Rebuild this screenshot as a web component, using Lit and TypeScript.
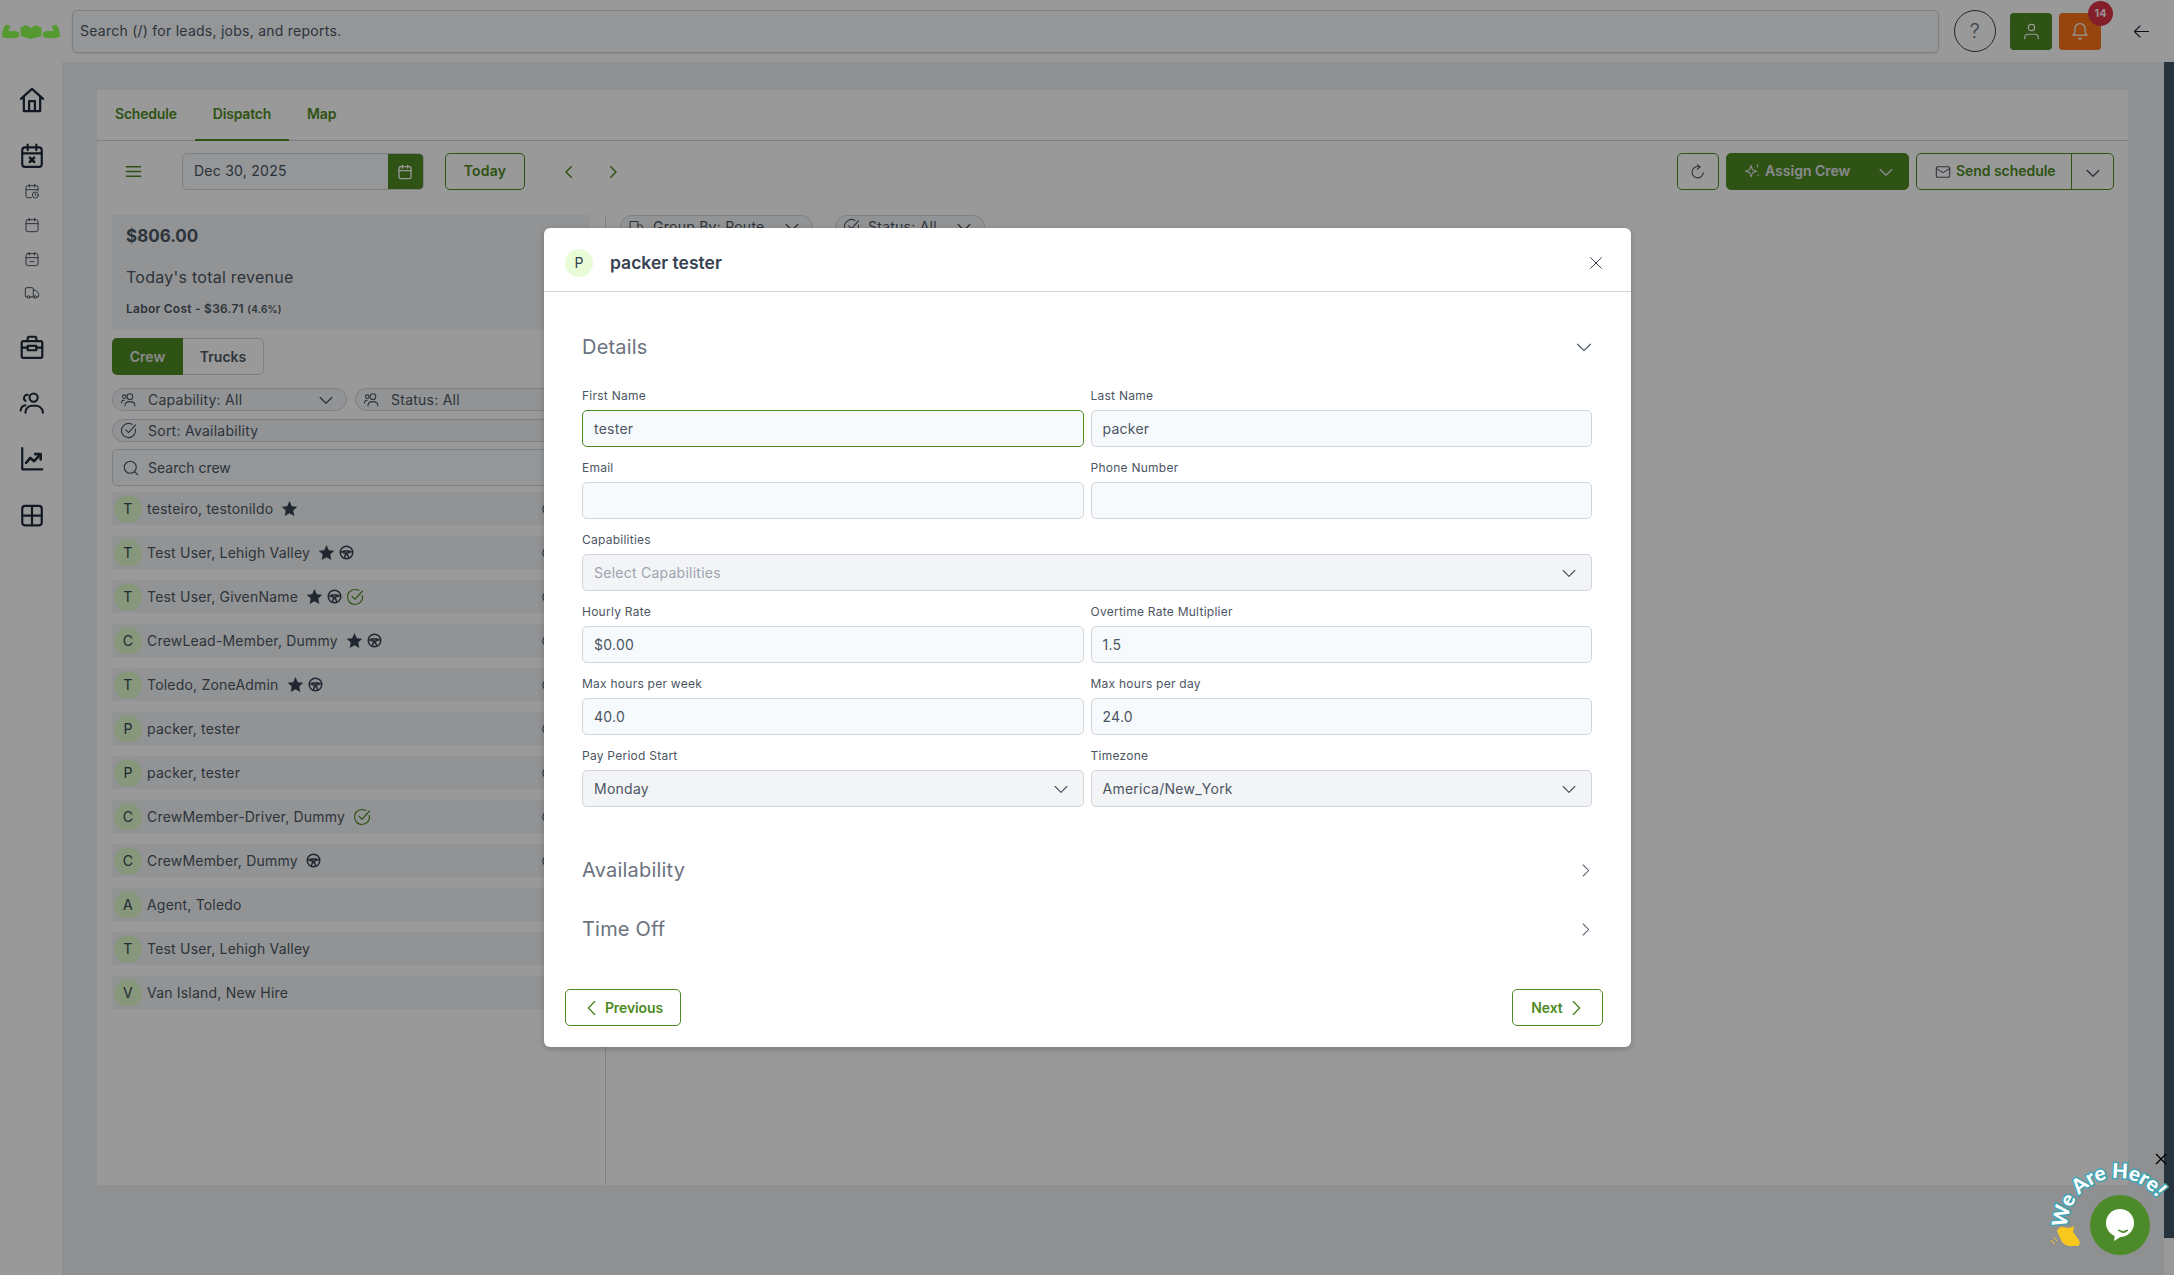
import { LitElement, html, css, svg } from 'lit';
import { customElement } from 'lit/decorators.js';

const I: Record<string, unknown> = {
  home: svg`<path d="M2.5 11 12 2.500l9.500 8.500"/><path d="M5 9v12.500h14V9"/><path d="M9.500 21.500V13h5v8.500"/>`,
  calX: svg`<rect x="3" y="4" width="18" height="18" rx="2.500"/><path d="M8 1.500v5M16 1.500v5M3 9.500h18"/><path d="m10 13.500 4 4M14 13.500l-4 4" stroke-width="2.400"/>`,
  calClock: svg`<path d="M11 22H5a2 2 0 0 1-2-2V6a2 2 0 0 1 2-2h14a2 2 0 0 1 2 2v6"/><path d="M8 2v4M16 2v4M3 10h18"/><circle cx="17" cy="18" r="4.500"/><path d="M17 16v2l1 1"/>`,
  cal: svg`<rect x="3" y="4" width="18" height="18" rx="2.500"/><path d="M8 2v4M16 2v4M3 10h18"/>`,
  calMinus: svg`<rect x="3" y="4" width="18" height="18" rx="2.500"/><path d="M8 2v4M16 2v4M3 10h18M9 16h6"/>`,
  truck: svg`<path d="M14 18V6a2 2 0 0 0-2-2H4a2 2 0 0 0-2 2v11a1 1 0 0 0 1 1h2"/><path d="M15 18H9"/><path d="M19 18h2a1 1 0 0 0 1-1v-3.650a1 1 0 0 0-.220-.620l-3.480-4.350A1 1 0 0 0 17.520 8H14"/><circle cx="17" cy="18" r="2"/><circle cx="7" cy="18" r="2"/>`,
  case: svg`<rect x="2.500" y="6.500" width="19" height="15.500" rx="1.500"/><path d="M8 6.500V4a1.500 1.500 0 0 1 1.500-1.500h5A1.500 1.500 0 0 1 16 4v2.500"/><path d="M2.500 12.500H8M16 12.500h5.500"/><path d="M8 11h8v4H8z"/>`,
  users: svg`<circle cx="13.500" cy="7" r="3.800"/><path d="M6 21v-1a6 6 0 0 1 6-5.500h3a6.500 6.500 0 0 1 7 5.500v1"/><path d="M8 4.500a3 3 0 0 0-2 5.500"/><path d="M1.500 19a5.500 5.500 0 0 1 4.500-5"/>`,
  chart: svg`<path d="M3 2v19.500h18.500"/><path d="m6.500 15.500 4-4.500 3.500 3 5.500-6" stroke-width="2.400"/><path d="M15 7.500h5v5" stroke-width="2.400"/>`,
  grid: svg`<rect x="3" y="3.500" width="18" height="18" rx="2.500"/><path d="M12 3.500v18M3 12.500h18"/>`,
  menu: svg`<path d="M3 6h18M3 12h18M3 18h18"/>`,
  search: svg`<circle cx="11" cy="11" r="8"/><path d="m21 21-4.300-4.300"/>`,
  down: svg`<path d="m5 9 7 7 7-7"/>`,
  left: svg`<path d="m15 5-7 7 7 7"/>`,
  right: svg`<path d="m9 5 7 7-7 7"/>`,
  close: svg`<path d="M4 4l16 16M20 4 4 20"/>`,
  check: svg`<path d="M21.800 10A10 10 0 1 1 17 3.340"/><path d="m8 11 4 4L22 4"/>`,
  crew: svg`<circle cx="14" cy="8" r="4"/><path d="M7 21c0-4 3-6 7-6s7 2 7 6"/><circle cx="6" cy="8" r="2.500"/><path d="M2 17c0-2.500 1.500-4 4-4"/>`,
  wheel: svg`<circle cx="12" cy="12" r="10"/><path d="M3 11C8 8 16 8 21 11L15 13A3 3 0 0 0 9 13z" fill="currentColor" stroke-width="1"/><circle cx="12" cy="14" r="1.500"/><path d="M10 16 8.500 21M14 16l1.500 5"/>`,
  route: svg`<path d="M3 19V5h11v14"/><path d="M14 10h5l2 4v5h-7"/>`,
  sparkle: svg`<path d="M10 5l2 6 6 2-6 2-2 6-2-6-6-2 6-2z"/><path d="M19 4v3M20 18v1"/>`,
  mail: svg`<rect x="2" y="4" width="20" height="16" rx="1.500"/><path d="m2 7 10 6 10-6"/>`,
  refresh: svg`<path d="M20 13a8.500 8.500 0 1 1-5-8.500"/><path d="M11 1l4 3.500L11 8"/>`,
  user: svg`<circle cx="12" cy="7" r="4"/><path d="M3.500 21v-1.500c0-2.500 2-4 4.500-4h8c2.500 0 4.500 1.500 4.500 4V21"/>`,
  bell: svg`<path d="M6 9a6 6 0 0 1 12 0c0 6 2.500 8 2.500 8h-17S6 15 6 9"/><path d="M10 20.500a2.200 2.200 0 0 0 4 0"/>`,
  back: svg`<path d="M22 12H2M10 4l-8 8 8 8"/>`,
  pin: svg`<circle cx="12" cy="12" r="9"/>`,
};

const ic = (name: string, size = 16, sw = 2) => html`<svg
  width=${size} height=${size} viewBox="0 0 24 24" fill="none" stroke="currentColor"
  stroke-width=${sw} stroke-linecap="round" stroke-linejoin="round">${I[name]}</svg>`;

const star = html`<svg width="17" height="17" viewBox="0 0 24 24" fill="currentColor"><path d="M12 1.500l3.300 7.200 7.700.9-5.700 5.300 1.500 7.700L12 18.700l-6.800 3.900 1.500-7.700L1 9.600l7.700-.9z"/></svg>`;

const crew: { a: string; n: string; s?: boolean; w?: boolean; c?: boolean; tail: boolean }[] = [
  { a: 'T', n: 'testeiro, testonildo', s: true, tail: true },
  { a: 'T', n: 'Test User, Lehigh Valley', s: true, w: true, tail: true },
  { a: 'T', n: 'Test User, GivenName', s: true, w: true, c: true, tail: true },
  { a: 'C', n: 'CrewLead-Member, Dummy', s: true, w: true, tail: true },
  { a: 'T', n: 'Toledo, ZoneAdmin', s: true, w: true, tail: true },
  { a: 'P', n: 'packer, tester', tail: true },
  { a: 'P', n: 'packer, tester', tail: true },
  { a: 'C', n: 'CrewMember-Driver, Dummy', c: true, tail: true },
  { a: 'C', n: 'CrewMember, Dummy', w: true, tail: true },
  { a: 'A', n: 'Agent, Toledo', tail: false },
  { a: 'T', n: 'Test User, Lehigh Valley', tail: false },
  { a: 'V', n: 'Van Island, New Hire', tail: false },
];

@customElement('app-root')
export class AppRoot extends LitElement {
  static styles = css`
    :host {
      display: block;
      position: relative;
      width: 2174px;
      height: 1275px;
      overflow: hidden;
      background: #fff;
      font-family: Inter, 'Liberation Sans', sans-serif;
      color: #4b5563;
      font-size: 14px;
      letter-spacing: 0.25px;
    }
    svg { display: block; flex: none; }

    .top { height: 62px; display: flex; align-items: center; }
    .logo { width: 72px; flex: none; padding-left: 2px; box-sizing: border-box; }
    .search {
      width: 1867px; height: 43px; box-sizing: border-box;
      border: 1px solid #d1d5db; border-radius: 5px; background: #f7fafd;
      box-shadow: 0 1px 2px rgba(0,0,0,.1);
      padding-left: 7px; line-height: 39px; font-size: 14px; color: #4b5563;
    }
    .help {
      width: 42px; height: 42px; box-sizing: border-box; border: 1px solid #374151; border-radius: 50%;
      margin-left: 15px; display: flex; align-items: center; justify-content: center;
      font-size: 20px; font-weight: 300; color: #6b7280;
    }
    .sq {
      position: relative; width: 42px; height: 37px; border-radius: 4px; color: #fff;
      display: flex; align-items: center; justify-content: center;
    }
    .sq.user { background: #4d8a22; margin-left: 14px; }
    .sq.bell { background: #f97316; margin-left: 7px; }
    .badge {
      position: absolute; left: 29px; top: -12px; width: 25px; height: 25px; border-radius: 50%;
      background: #dc3545; color: #fff; font-size: 11px; font-weight: 600; letter-spacing: 0;
      display: flex; align-items: center; justify-content: center;
    }
    .back { margin-left: 32px; color: #111827; }

    .body { display: flex; height: 1213px; }
    .nav {
      width: 62px; flex: none; box-sizing: border-box; padding: 26px 0 0 2px;
      display: flex; flex-direction: column; align-items: center; gap: 32px; color: #1f2937;
    }
    .nav .n { margin: -1px; }
    .nav .h { margin: -2px; }
    .navgroup { display: flex; flex-direction: column; align-items: center; gap: 18px; margin-bottom: 1.500px; color: #4b5563; }
    .navgroup .big { color: #1f2937; margin-bottom: -4px; }
    .main { flex: 1; display: flex; background: #eff1f3; min-width: 0; }
    .wrap { flex: 1; min-width: 0; padding: 28px 36px 0 35px; }
    .strip { width: 10px; height: 1176px; background: #3e5364; }
    .strip-host { width: 10px; flex: none; background: #fff; }

    .card { height: 1095px; background: #fff; display: flex; flex-direction: column; overflow: hidden; }
    .tabs { display: flex; height: 50px; border-bottom: 1px solid #d1d5db; flex: none; }
    .tab {
      padding: 0 18px; line-height: 48px; font-weight: 600; font-size: 14px; color: #4d8a22;
      margin-bottom: -1px; height: 51px; box-sizing: border-box; letter-spacing: -0.2px;
    }
    .tab.on { border-bottom: 2px solid #4d8a22; }

    .tools { display: flex; align-items: center; height: 37px; margin-top: 12px; padding-right: 14px; flex: none; }
    .ham { color: #4d8a22; margin: 0 39.4px 0 26.6px; }
    .date {
      display: flex; height: 37px; width: 242px; box-sizing: border-box; border: 1px solid #d1d5db;
      border-radius: 5px; background: #f7fafd; overflow: hidden; margin-right: 21px;
    }
    .date span { flex: 1; line-height: 33px; padding-left: 11px; }
    .date i { width: 35px; background: #4d8a22; color: #fff; display: flex; align-items: center; justify-content: center; }
    .btn {
      height: 37px; box-sizing: border-box; border: 1px solid #4d8a22; border-radius: 5px;
      color: #4d8a22; font-weight: 600; font-size: 14px; display: flex; align-items: center;
      justify-content: center; background: #fff; letter-spacing: 0;
    }
    .today { width: 80px; margin-right: 35px; letter-spacing: .25px; padding-bottom: 2px; }
    .step { color: #4d8a22; margin-right: 26px; }
    .right { margin-left: auto; display: flex; gap: 7px; }
    .refresh { width: 42px; color: #4b5563; }
    .assign { width: 183px; background: #4d8a22; color: #e5e7eb; gap: 4px; justify-content: flex-start; padding: 0 0 2px 17px; }
    .assign .caret { margin-left: auto; margin-right: 12px; margin-bottom: -2px; }
    .send { width: 198px; justify-content: flex-start; padding: 0 0 2px 18px; gap: 5px; letter-spacing: -0.05px; }
    .send svg:first-child { color: #4b5563; margin-bottom: -2px; }
    .send .sep { margin-left: auto; width: 41px; height: 35px; margin-bottom: -2px; border-left: 1px solid #4d8a22; display: flex; align-items: center; justify-content: center; }

    .content { display: flex; flex: 1; margin-top: 25px; min-height: 0; }
    .left { width: 478px; margin: 0 15px; flex: none; display: flex; flex-direction: column; }
    .rev { height: 115px; box-sizing: border-box; background: #f3f5f7; padding: 10px 14px; flex: none; }
    .rev b { display: block; font-size: 17px; line-height: 22px; font-weight: 700; letter-spacing: 0; }
    .rev p { margin: 19px 0 0; font-size: 16px; line-height: 22px; }
    .rev small { display: block; margin-top: 13px; font-size: 12px; line-height: 16px; font-weight: 600; }
    .rev small em { font-style: normal; font-size: 10px; }

    .seg { display: flex; margin-top: 8px; height: 37px; flex: none; width: 152px; border-radius: 5px; overflow: hidden; box-sizing: border-box; letter-spacing: 0; }
    .seg span { display: flex; align-items: center; justify-content: center; font-weight: 600; font-size: 14px; }
    .seg .on { width: 71px; background: #4d8a22; color: #e5e7eb; }
    .seg .off { flex: 1; border: 1px solid #d1d5db; border-left: 0; border-radius: 0 5px 5px 0; }

    .chips { display: flex; gap: 8px; margin-top: 13px; }
    .chip {
      height: 23px; box-sizing: border-box; border: 1px solid #d1d5db; border-radius: 12px;
      background: #f3f5f7; display: flex; align-items: center; padding: 0 10px 0 7px; flex: 1; min-width: 0;
      font-size: 14px; white-space: nowrap; overflow: hidden;
    }
    .chip > svg:first-child { margin-right: 11px; }
    .chip .caret { margin-left: auto; }
    .chip.full { margin-top: 8px; flex: none; }
    .find {
      height: 37px; box-sizing: border-box; margin: 7px 0 6px; border: 1px solid #d1d5db; border-radius: 5px;
      background: #f7fafd; display: flex; align-items: center; gap: 8px; padding-left: 9px; flex: none; letter-spacing: 0;
    }
    .row {
      height: 33px; margin-bottom: 11px; background: #f3f5f7; display: flex; align-items: center;
      padding: 0 35px 0 2px; flex: none; gap: 4px;
    }
    .av {
      width: 28px; height: 28px; border-radius: 50%; background: #e0fccd; color: #374151;
      display: flex; align-items: center; justify-content: center; flex: none;
    }
    .nm { margin-right: 4px; letter-spacing: .2px; }
    .row .av + .nm { margin-left: 1px; }
    .row .stat { color: #374151; }
    .row .ok { color: #4d8a22; }
    .row .tail { margin-left: auto; }

    .pane { flex: 1; border-left: 1px solid #d1d5db; padding-left: 14px; display: flex; gap: 22px; align-items: flex-start; }
    .pane .chip { flex: none; }
    .pane .chip > svg:first-child { margin-right: 8px; }
    .pane .gb { width: 193px; }
    .pane .st { width: 150px; }

    .veil { position: absolute; inset: 0; background: rgba(0,0,0,.4); }
    .modal {
      position: absolute; left: 544px; top: 228px; width: 1087px; height: 819px; background: #fff;
      border-radius: 6px; display: flex; flex-direction: column; box-shadow: 0 2px 6px rgba(0,0,0,.2);
    }
    .mhead {
      height: 64px; box-sizing: border-box; border-bottom: 1px solid #d1d5db; display: flex; align-items: center;
      padding: 6px 27px 0 21px; flex: none;
    }
    .mhead .pic { width: 28px; height: 28px; border-radius: 50%; background: #e8fcd8; color: #374151; display: flex; align-items: center; justify-content: center; margin-right: 17px; }
    .mhead b { font-size: 17.500px; font-weight: 600; color: #374151; letter-spacing: 0; }
    .mhead svg { margin-left: auto; color: #374151; }
    .mbody { padding: 35px 39px 0 38px; }
    .shead { display: flex; align-items: center; justify-content: space-between; height: 40px; font-size: 20px; color: #6b7280; letter-spacing: .2px; }
    .shead svg { color: #4b5563; }
    .shead .chev { margin-right: -3px; }
    .shead.more { margin-top: 19px; }
    .form { display: grid; grid-template-columns: 1fr 1fr; column-gap: 7px; row-gap: 12px; margin: 20px 0 43px; }
    .f.wide { grid-column: 1 / -1; }
    .f label { display: block; font-size: 12px; line-height: 18px; margin-bottom: 5px; color: #4b5563; letter-spacing: .25px; }
    .inp {
      height: 37px; box-sizing: border-box; border: 1px solid #d1d5db; border-radius: 5px; background: #f7fafd;
      padding: 0 12px 0 11px; display: flex; align-items: center; justify-content: space-between; font-size: 14px; color: #4b5563;
    }
    .inp.sel { background: #f3f4f6; }
    .inp.focus { border-color: #4d8a22; }
    .inp .ph { color: #9ca3af; }
    .mfoot { margin-top: auto; display: flex; justify-content: space-between; padding: 0 28px 21px 21px; }
    .mfoot .btn { gap: 2px; letter-spacing: -0.1px; }
    .prev { width: 116px; padding-right: 2px; }
    .next { width: 91px; padding-left: 3px; }

    .chat { position: absolute; left: 1974px; top: 1100px; }
    .chat text { font-family: Lato, 'Open Sans', sans-serif; font-weight: 900; font-size: 20.500px; letter-spacing: 0; fill: #fff; stroke: #3fa3b3; stroke-width: 3px; paint-order: stroke; }
  `;

  private _field(label: string, value: string, opts: { focus?: boolean; sel?: boolean; wide?: boolean; ph?: boolean } = {}) {
    return html`<div class="f ${opts.wide ? 'wide' : ''}">
      <label>${label}</label>
      <div class="inp ${opts.focus ? 'focus' : ''} ${opts.sel ? 'sel' : ''}">
        <span class=${opts.ph ? 'ph' : ''}>${value}</span>
        ${opts.sel ? ic('down', 20, 1.4) : ''}
      </div>
    </div>`;
  }

  render() {
    return html`
      <div class="top">
        <div class="logo">
          <svg width="58" height="16" viewBox="0 0 58 16" fill="#90ff50">
            <path d="M0 14C0 8 2 3 4 1.500L8.500 3 7.500 6 6 7c2 1.500 4 1.500 6 .5L17 9.500V14Q9 16.500 0 14z"/>
            <path d="M18.500 4.500 24 2l5 3 5-3 5.500 2.500V13L29 16 18.500 13z"/>
            <path d="M58 14c0-6-2-11-4-12.500L49.500 3l1 3L52 7c-2 1.500-4 1.500-6 .5L41 9.500V14q8 2.500 17 0z"/>
          </svg>
        </div>
        <div class="search">Search (/) for leads, jobs, and reports.</div>
        <div class="help">?</div>
        <div class="sq user">${ic('user', 19, 1.5)}</div>
        <div class="sq bell">${ic('bell', 20, 1.5)}<span class="badge">14</span></div>
        <div class="back">${ic('back', 17, 1.5)}</div>
      </div>
      <div class="body">
        <div class="nav">
          <span class="h">${ic('home', 28, 1.9)}</span>
          <div class="navgroup">
            <span class="big n">${ic('calX', 26, 2)}</span>
            ${ic('calClock', 16, 1.5)}${ic('cal', 16, 1.5)}${ic('calMinus', 16, 1.5)}${ic('truck', 16, 1.5)}
          </div>
          <span class="n">${ic('case', 26, 2)}</span>
          <span class="n">${ic('users', 26, 1.9)}</span>
          <span class="n">${ic('chart', 26, 2)}</span>
          <span class="n">${ic('grid', 26, 2)}</span>
        </div>
        <div class="main">
          <div class="wrap">
            <div class="card">
              <div class="tabs">
                <div class="tab">Schedule</div>
                <div class="tab on">Dispatch</div>
                <div class="tab">Map</div>
              </div>
              <div class="tools">
                <span class="ham">${ic('menu', 19, 1.8)}</span>
                <div class="date"><span>Dec 30, 2025</span><i>${ic('cal', 16, 2)}</i></div>
                <div class="btn today">Today</div>
                <span class="step">${ic('left', 18, 2)}</span>
                <span class="step">${ic('right', 18, 2)}</span>
                <div class="right">
                  <div class="btn refresh">${ic('refresh', 16, 1.6)}</div>
                  <div class="btn assign">${ic('sparkle', 17, 1.5)}Assign Crew<span class="caret">${ic('down', 20, 1.6)}</span></div>
                  <div class="btn send">${ic('mail', 16, 1.6)}Send schedule<span class="sep">${ic('down', 20, 1.6)}</span></div>
                </div>
              </div>
              <div class="content">
                <div class="left">
                  <div class="rev">
                    <b>$806.00</b>
                    <p>Today's total revenue</p>
                    <small>Labor Cost - $36.71 <em>(4.6%)</em></small>
                  </div>
                  <div class="seg"><span class="on">Crew</span><span class="off">Trucks</span></div>
                  <div class="chips">
                    <div class="chip">${ic('crew', 17, 1.5)}Capability: All<span class="caret">${ic('down', 20, 1.6)}</span></div>
                    <div class="chip">${ic('crew', 17, 1.5)}Status: All<span class="caret">${ic('down', 20, 1.6)}</span></div>
                  </div>
                  <div class="chip full">${ic('check', 17, 1.6)}Sort: Availability</div>
                  <div class="find">${ic('search', 18, 1.5)}Search crew</div>
                  ${crew.map(
                    r => html`<div class="row">
                      <span class="av">${r.a}</span>
                      <span class="nm">${r.n}</span>
                      ${r.s ? html`<span class="stat">${star}</span>` : ''}
                      ${r.w ? html`<span class="stat">${ic('wheel', 15, 2.4)}</span>` : ''}
                      ${r.c ? html`<span class="ok">${ic('check', 18, 1.5)}</span>` : ''}
                      ${r.tail ? html`<span class="tail">${ic('pin', 14, 2)}</span>` : ''}
                    </div>`,
                  )}
                </div>
                <div class="pane">
                  <div class="chip gb">${ic('route', 17, 1.5)}Group By: Route<span class="caret">${ic('down', 20, 1.6)}</span></div>
                  <div class="chip st">${ic('check', 17, 1.5)}Status: All<span class="caret">${ic('down', 20, 1.6)}</span></div>
                </div>
              </div>
            </div>
          </div>
          <div class="strip-host"><div class="strip"></div></div>
        </div>
      </div>

      <div class="veil"></div>

      <div class="modal">
        <div class="mhead">
          <span class="pic">P</span>
          <b>packer tester</b>
          ${ic('close', 16, 1.5)}
        </div>
        <div class="mbody">
          <div class="shead">Details <span class="chev">${ic('down', 22, 1.3)}</span></div>
          <div class="form">
            ${this._field('First Name', 'tester', { focus: true })}
            ${this._field('Last Name', 'packer')}
            ${this._field('Email', '')}
            ${this._field('Phone Number', '')}
            ${this._field('Capabilities', 'Select Capabilities', { sel: true, wide: true, ph: true })}
            ${this._field('Hourly Rate', '$0.00')}
            ${this._field('Overtime Rate Multiplier', '1.5')}
            ${this._field('Max hours per week', '40.0')}
            ${this._field('Max hours per day', '24.0')}
            ${this._field('Pay Period Start', 'Monday', { sel: true })}
            ${this._field('Timezone', 'America/New_York', { sel: true })}
          </div>
          <div class="shead">Availability <span class="chev">${ic('right', 19, 1.3)}</span></div>
          <div class="shead more">Time Off <span class="chev">${ic('right', 19, 1.3)}</span></div>
        </div>
        <div class="mfoot">
          <div class="btn prev">${ic('left', 22, 1.6)}Previous</div>
          <div class="btn next">Next${ic('right', 22, 1.6)}</div>
        </div>
      </div>

      <svg class="chat" width="200" height="175" viewBox="0 0 200 175">
        <defs><path id="arc" d="M93 128A50 50 0 0 1 193 128"/></defs>
        <text><textPath href="#arc">We Are Here!</textPath></text>
        <circle cx="146" cy="125" r="30" fill="#4d8a2a"/>
        <circle cx="146" cy="123" r="14" fill="#fff"/>
        <path d="M141 134l-1 7 8-5z" fill="#fff"/>
        <path d="M144 130q5 3 10 0q-4 5-10 0" fill="#4d8a2a" stroke="#4d8a2a"/>
        <path d="M83 131q3-5 6-4l6 1 5-2-1 6 6 8q2 4-1 6l-9 0q-6-1-8-6z" fill="#f8c81e"/>
        <path d="M77 140q2 3 4 4M80 137q2 3 3 4" stroke="#f8c81e" fill="none"/>
        <path d="M182 54l10 10M192 54l-10 10" stroke="#000" stroke-width="1.400"/>
      </svg>
    `;
  }
}
